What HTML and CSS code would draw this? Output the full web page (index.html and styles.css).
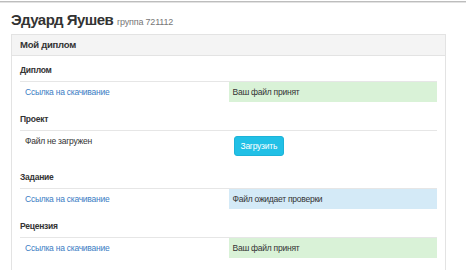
FILE: index.html
```html
<!DOCTYPE html>
<html>
<head>
    <title>Мой диплом</title>
    <link rel="stylesheet" href="styles.css">
</head>
<body>
    <div class="topbar"></div>

    <h1 class="student">Эдуард Яушев <small>группа 721112</small></h1>

    <div class="panel">
        <div class="panel-heading">Мой диплом</div>
        <div class="panel-body">

            <!-- Диплом -->
            <h4 class="section-title">Диплом</h4>
            <table class="files">
                <tr>
                    <td><a href="#">Ссылка на скачивание</a></td>
                    <td class="ok">Ваш файл принят</td>
                </tr>
            </table>

            <!-- Проект -->
            <h4 class="section-title">Проект</h4>
            <table class="files">
                <tr>
                    <td>Файл не загружен</td>
                    <td><button class="btn-upload" type="button">Загрузить</button></td>
                </tr>
            </table>

            <!-- Задание -->
            <h4 class="section-title">Задание</h4>
            <table class="files">
                <tr>
                    <td><a href="#">Ссылка на скачивание</a></td>
                    <td class="wait">Файл ожидает проверки</td>
                </tr>
            </table>

            <!-- Рецензия -->
            <h4 class="section-title">Рецензия</h4>
            <table class="files">
                <tr>
                    <td><a href="#">Ссылка на скачивание</a></td>
                    <td class="ok">Ваш файл принят</td>
                </tr>
            </table>

        </div>
    </div>
</body>
</html>
```

FILE: styles.css
```css
body {
    margin: 0;
    font-family: "Liberation Sans", Arial, sans-serif;
    font-size: 8.5px;
    letter-spacing: -0.25px;
    color: #333;
    background: #fff;
}

.topbar {
    margin: 1px 3px 0 0;
    height: 1px;
    background-color: #bdbdbd;
    border-bottom: 1px solid #e2e2e2;
}

.student {
    margin: 8px 0 0 11px;
    font-size: 15px;
    line-height: 18px;
    letter-spacing: -0.5px;
    font-weight: bold;
    color: #333;
}

.student small {
    font-size: 9px;
    line-height: 1;
    letter-spacing: -0.2px;
    font-weight: normal;
    color: #777;
}

.panel {
    margin: 5px 0 0 11px;
    width: 433px;
    border: 1px solid #e3e3e3;
    border-bottom: none;
}

.panel-heading {
    height: 20px;
    line-height: 20px;
    padding-left: 8px;
    background-color: #f4f4f4;
    border-bottom: 1px solid #e3e3e3;
    font-size: 9.5px;
    font-weight: bold;
}

.panel-body {
    padding: 0 8px 20px 8px;
}

.section-title {
    margin: 11px 0 5px 0;
    line-height: 12px;
    font-size: 8.5px;
    font-weight: bold;
}

.section-title:first-child {
    margin-top: 8px;
}

.files {
    width: 417px;
    border-collapse: collapse;
    table-layout: fixed;
}

.files td {
    border-top: 1px solid #e6e6e6;
    padding: 4px 5px;
    line-height: 12px;
    vertical-align: top;
}

.files a {
    color: #3a7dc4;
    text-decoration: none;
}

.files td.ok {
    background-color: #d9f2d7;
    padding-left: 4px;
}

.files td.wait {
    background-color: #d4eaf7;
    padding-left: 4px;
}

.btn-upload {
    margin: 1px 0 0 0;
    height: 20px;
    padding: 0 6px;
    font-family: inherit;
    font-size: 8.5px;
    letter-spacing: -0.25px;
    color: #fff;
    background-color: #21c0e6;
    border: 1px solid #1cb3d8;
    border-radius: 3px;
}
```
